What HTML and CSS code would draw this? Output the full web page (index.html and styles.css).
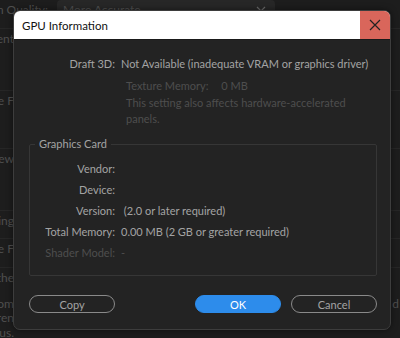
FILE: index.html
```html
<!DOCTYPE html>
<html lang="en">
<head>
    <meta charset="UTF-8">
    <meta name="viewport" content="width=device-width, initial-scale=1.0">
    <title>GPU Information</title>
    <link rel="stylesheet" href="styles.css">
</head>
<body>
    <!-- Preferences panel behind the dialog -->
    <div class="app">
        <div class="app-top">
            <div class="app-label"><span>Playback Stream Quality:</span></div>
            <div class="app-select">
                <span>More Accurate</span>
                <svg width="10" height="6" viewBox="0 0 10 6"><path d="M1 1 L5 5 L9 1" fill="none" stroke="#6a6a6a" stroke-width="1.2"/></svg>
            </div>
        </div>
        <div class="app-row row-a"><div class="app-label"><span>Current</span></div></div>
        <div class="app-row row-b"><div class="app-label"><span>Enable F</span></div></div>
        <div class="app-row row-c"><div class="app-label"><span>Preview</span></div></div>
        <div class="app-row row-d"><div class="app-label"><span>Rendering</span></div></div>
        <div class="app-row row-e"><div class="app-label"><span>Enable F</span></div></div>
        <div class="app-row row-f"><div class="app-label"><span>the</span></div></div>
        <div class="app-row row-g">
            <div class="app-label"><span>from</span></div>
            <div class="app-tail">d</div>
        </div>
        <div class="app-row row-h"><div class="app-label"><span>curren</span></div></div>
        <div class="app-row row-i"><div class="app-label"><span>tus.</span></div></div>
    </div>

    <div class="dialog">
        <div class="dialog-title">
            <div class="title-text">GPU Information</div>
            <button class="close-btn" aria-label="Close">
                <svg width="12" height="12" viewBox="0 0 12 12"><path d="M1 1 L11 11 M11 1 L1 11" stroke="#222" stroke-width="1.2"/></svg>
            </button>
        </div>
        <div class="dialog-body">
            <div class="info-row">
                <div class="info-label">Draft 3D:</div>
                <div class="info-value">Not Available (inadequate VRAM or graphics driver)</div>
            </div>
            <div class="texture-row">
                <span>Texture Memory:</span>
                <span class="texture-value">0 MB</span>
            </div>
            <div class="note">This setting also affects hardware-accelerated<br>panels.</div>

            <fieldset class="card">
                <legend>Graphics Card</legend>
                <div class="card-row">
                    <div class="info-label">Vendor:</div>
                    <div class="info-value"></div>
                </div>
                <div class="card-row">
                    <div class="info-label">Device:</div>
                    <div class="info-value"></div>
                </div>
                <div class="card-row">
                    <div class="info-label">Version:</div>
                    <div class="info-value">&nbsp;(2.0 or later required)</div>
                </div>
                <div class="card-row">
                    <div class="info-label">Total Memory:</div>
                    <div class="info-value">0.00 MB (2 GB or greater required)</div>
                </div>
                <div class="card-row disabled">
                    <div class="info-label">Shader Model:</div>
                    <div class="info-value">-</div>
                </div>
            </fieldset>

            <div class="buttons">
                <button class="btn">Copy</button>
                <div class="btn-group">
                    <button class="btn btn-primary">OK</button>
                    <button class="btn">Cancel</button>
                </div>
            </div>
        </div>
    </div>
</body>
</html>
```

FILE: styles.css
```css
:root {
    --bg-app: #1d1d1d;
    --bg-dialog: #232323;
    --border: #3d3d3d;
    --text: #a3a3a3;
    --text-dim: #4e4e4e;
    --text-app: #4f4f4f;
    --primary: #2d8ceb;
}

* {
    margin: 0;
    padding: 0;
    box-sizing: border-box;
}

body {
    width: 400px;
    height: 338px;
    overflow: hidden;
    background: var(--bg-app);
    font-family: 'Lato', 'Noto Sans', sans-serif;
    font-size: 11px;
    color: var(--text);
    position: relative;
}

/* Background app */
.app {
    display: flex;
    flex-direction: column;
}

.app-top {
    display: flex;
    align-items: center;
    height: 18px;
    gap: 9px;
}

.app-label {
    width: 48px;
    display: flex;
    justify-content: flex-end;
    overflow: hidden;
    white-space: nowrap;
    color: var(--text-app);
    font-size: 12px;
    flex-shrink: 0;
}

.app-select {
    width: 218px;
    height: 18px;
    background: #272727;
    border-radius: 4px;
    display: flex;
    align-items: center;
    justify-content: space-between;
    padding: 0 9px 0 6px;
    color: var(--text-app);
    font-size: 12px;
}

.app-row {
    height: 20px;
    display: flex;
    align-items: center;
    justify-content: space-between;
    border-top: 1px solid #262626;
}

.app-row .app-label {
    width: auto;
    max-width: 14px;
    justify-content: flex-end;
}

.row-a { margin-top: 10px; }
.row-b { margin-top: 42px; }
.row-c { margin-top: 38px; }
.row-d { margin-top: 42px; }
.row-e { margin-top: 8px; }
.row-f { margin-top: 9px; }
.row-g { margin-top: 9px; height: 14px; border-top: none; }
.row-h { height: 14px; border-top: none; }
.row-i { margin-top: 1px; height: 14px; border-top: none; }

.app-tail {
    color: var(--text-app);
    font-size: 12px;
    padding-right: 1px;
}

/* Dialog */
.dialog {
    position: absolute;
    left: 13px;
    top: 10px;
    width: 378px;
    height: 320px;
    background: var(--bg-dialog);
    border: 1px solid var(--border);
    border-radius: 7px;
    overflow: hidden;
    box-shadow: 0 0 6px rgba(0, 0, 0, 0.5);
}

.dialog-title {
    height: 29px;
    background: #fff;
    display: flex;
    align-items: center;
    justify-content: space-between;
    border-bottom: 1px solid #1a1a1a;
}

.title-text {
    font-family: 'Lato', 'Noto Sans', sans-serif;
    font-size: 11.5px;
    color: #111;
    padding-left: 8px;
}

.close-btn {
    width: 30px;
    height: 28px;
    border: none;
    background: #d9665b;
    display: flex;
    align-items: center;
    justify-content: center;
}

.dialog-body {
    padding: 14px 14px 0 15px;
}

.info-row,
.card-row {
    display: grid;
    grid-template-columns: 86px 1fr;
    column-gap: 6px;
    line-height: 20px;
}

.info-label {
    text-align: right;
    white-space: nowrap;
}

.info-value {
    white-space: nowrap;
}

.texture-row {
    margin-top: 3px;
    padding-left: 97px;
    line-height: 18px;
    color: var(--text-dim);
}

.texture-value {
    margin-left: 10px;
}

.note {
    padding-left: 97px;
    line-height: 16px;
    color: var(--text-dim);
}

/* Graphics card group */
.card {
    margin-top: 9px;
    border: 1px solid #363636;
    border-radius: 2px;
    padding: 6px 0 12px 0;
    width: 348px;
}

.card legend {
    margin-left: 5px;
    padding: 0 4px;
    line-height: 16px;
    font-size: 11px;
}

.card-row {
    grid-template-columns: 85px 1fr;
    line-height: 21px;
}

.card-row.disabled {
    color: var(--text-dim);
}

/* Buttons */
.buttons {
    margin-top: 19px;
    display: flex;
    justify-content: space-between;
    width: 348px;
}

.btn-group {
    display: flex;
    gap: 10px;
}

.btn {
    width: 86px;
    height: 18px;
    border: 1px solid #8a8a8a;
    border-radius: 9px;
    background: transparent;
    color: var(--text);
    font-family: 'Lato', 'Noto Sans', sans-serif;
    font-size: 11px;
}

.btn-primary {
    background: var(--primary);
    border-color: var(--primary);
    color: #fff;
}
```
